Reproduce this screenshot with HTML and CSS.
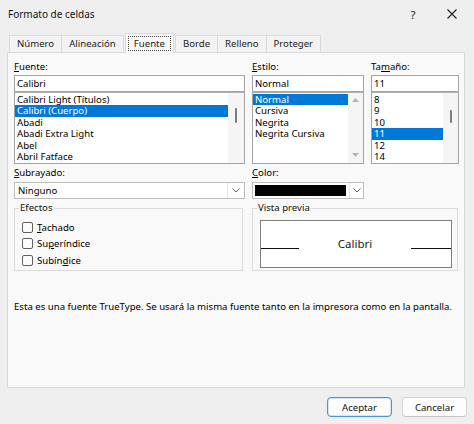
FILE: index.html
```html
<!DOCTYPE html>
<html lang="es">
<head>
<meta charset="utf-8">
<title>Formato de celdas</title>
<link rel="stylesheet" href="styles.css">
</head>
<body>
<div class="dialog">
  <header class="titlebar">
    <span class="title">Formato de celdas</span>
    <span class="help">?</span>
    <svg class="close" width="10" height="10" viewBox="0 0 10 10"><path d="M0.5 0.5L9.5 9.5M9.5 0.5L0.5 9.5" stroke="#1f1f1f" stroke-width="1.1" fill="none"/></svg>
  </header>
  <nav class="tabs">
    <span class="tab">Número</span>
    <span class="tab">Alineación</span>
    <span class="tab active"><span class="focus">Fuente</span></span>
    <span class="tab">Borde</span>
    <span class="tab">Relleno</span>
    <span class="tab">Proteger</span>
  </nav>
  <section class="panel">
    <div class="grid-top">
      <div class="col">
        <div class="lbl"><u>F</u>uente:</div>
        <div class="input">Calibri</div>
        <div class="list">
          <ul class="items">
            <li>Calibri Light (Títulos)</li>
            <li class="sel">Calibri (Cuerpo)</li>
            <li>Abadi</li>
            <li>Abadi Extra Light</li>
            <li>Abel</li>
            <li>Abril Fatface</li>
          </ul>
          <div class="scroll scroll-font"><span class="thumb"></span></div>
        </div>
      </div>
      <div class="col">
        <div class="lbl"><u>E</u>stilo:</div>
        <div class="input">Normal</div>
        <div class="list">
          <ul class="items">
            <li class="sel">Normal</li>
            <li>Cursiva</li>
            <li>Negrita</li>
            <li>Negrita Cursiva</li>
          </ul>
          <div class="scroll scroll-style">
            <svg width="7" height="4" viewBox="0 0 7 4"><path d="M0 4L3.5 0L7 4Z" fill="#b4b4b4"/></svg>
            <svg width="7" height="4" viewBox="0 0 7 4"><path d="M0 0L3.5 4L7 0Z" fill="#b4b4b4"/></svg>
          </div>
        </div>
      </div>
      <div class="col">
        <div class="lbl">Ta<u>m</u>año:</div>
        <div class="input">11</div>
        <div class="list">
          <ul class="items">
            <li>8</li>
            <li>9</li>
            <li>10</li>
            <li class="sel">11</li>
            <li>12</li>
            <li>14</li>
          </ul>
          <div class="scroll scroll-size"><span class="thumb"></span></div>
        </div>
      </div>
    </div>

    <div class="grid-mid">
      <div class="col">
        <div class="lbl lbl-mid"><u>S</u>ubrayado:</div>
        <div class="dropdown">
          <span class="dd-text">Ninguno</span>
          <span class="dd-btn dd-btn-wide"><svg width="8" height="5" viewBox="0 0 8 5"><path d="M0.5 0.5L4 4L7.5 0.5" stroke="#606060" stroke-width="1" fill="none"/></svg></span>
        </div>
      </div>
      <div class="col">
        <div class="lbl lbl-mid"><u>C</u>olor:</div>
        <div class="dropdown">
          <span class="swatch"></span>
          <span class="dd-btn"><svg width="8" height="5" viewBox="0 0 8 5"><path d="M0.5 0.5L4 4L7.5 0.5" stroke="#606060" stroke-width="1" fill="none"/></svg></span>
        </div>
      </div>
    </div>

    <div class="grid-groups">
      <fieldset class="group">
        <legend>Efectos</legend>
        <div class="checks">
          <div class="check"><span class="box"></span><span><u>T</u>achado</span></div>
          <div class="check"><span class="box"></span><span>Su<u>p</u>eríndice</span></div>
          <div class="check"><span class="box"></span><span>Subín<u>d</u>ice</span></div>
        </div>
      </fieldset>
      <fieldset class="group">
        <legend>Vista previa</legend>
        <div class="preview">
          <span class="pline pline-left"></span>
          <span class="ptext">Calibri</span>
          <span class="pline pline-right"></span>
        </div>
      </fieldset>
    </div>

    <p class="note">Esta es una fuente TrueType. Se usará la misma fuente tanto en la impresora como en la pantalla.</p>
  </section>
  <footer class="buttons">
    <button class="btn btn-default">Aceptar</button>
    <button class="btn">Cancelar</button>
  </footer>
</div>
</body>
</html>
```
FILE: styles.css
```css
* { box-sizing: border-box; }

html, body {
  margin: 0;
  padding: 0;
}

body {
  background: #efefef;
  font-family: "Noto Sans", "DejaVu Sans", sans-serif;
  font-size: 9.6px;
  color: #000;
}

u { text-underline-offset: 1px; }

.dialog {
  width: 474px;
  height: 424px;
  display: flex;
  flex-direction: column;
  background: #efefef;
  overflow: hidden;
}

/* Title bar */
.titlebar {
  height: 33px;
  flex: none;
  display: flex;
  align-items: center;
  padding: 0 17px 5px 8px;
}
.title {
  flex: 1;
  font-size: 10px;
  color: #111;
}
.help {
  width: 10px;
  text-align: center;
  font-size: 11.5px;
  color: #222;
  margin-right: 29px;
}
.close { display: block; }

/* Tabs */
.tabs {
  height: 19px;
  flex: none;
  display: flex;
  align-items: flex-end;
  padding-left: 9px;
}
.tab {
  height: 17px;
  line-height: 16px;
  padding: 0 7px;
  border: 1px solid #dadada;
  border-bottom: none;
  margin-right: -1px;
  background: #f3f3f3;
  color: #1a1a1a;
  white-space: nowrap;
}
.tab.active {
  height: 20px;
  margin: 0 1px -1px 2px;
  padding: 2px 2px 0;
  background: #f9f9f9;
  position: relative;
  z-index: 1;
}
.focus {
  display: block;
  border: 1px dotted #444;
  line-height: 13px;
  padding: 0 5px;
}

/* Panel */
.panel {
  flex: none;
  width: 458px;
  height: 336px;
  margin-left: 7px;
  border: 1px solid #dadada;
  background: #f9f9f9;
  padding: 7px 4px 0 6px;
}

.grid-top {
  display: grid;
  grid-template-columns: 231px 112px 88px;
  column-gap: 7px;
}
.lbl {
  height: 14px;
  line-height: 14px;
  margin-bottom: 1px;
  white-space: nowrap;
}
.input {
  height: 17px;
  border: 1px solid #a4a4a4;
  background: #fff;
  line-height: 15px;
  padding: 0 2px;
}
.list {
  height: 72px;
  border: 1px solid #a4a4a4;
  border-top-color: #b0b0b0;
  background: #fff;
  display: flex;
  overflow: hidden;
}
.items {
  flex: 1;
  list-style: none;
  margin: 0;
  padding: 1px 0 0;
  line-height: 11.4px;
  min-width: 0;
}
.items li {
  padding-left: 2px;
  white-space: nowrap;
  overflow: hidden;
}
.items li.sel {
  background: #0078d7;
  color: #fff;
}
.scroll {
  flex: none;
  width: 15px;
  background: #f5f5f5;
  display: flex;
  flex-direction: column;
  align-items: center;
}
.scroll-font { width: 16px; padding-top: 15px; }
.scroll-size { padding-top: 17px; }
.scroll-style {
  justify-content: space-between;
  padding: 5px 0 6px;
}
.scroll svg { display: block; }
.thumb {
  display: block;
  width: 2px;
  height: 15px;
  background: #7c7c7c;
  border-radius: 1px;
}
.scroll-size .thumb { height: 13px; }

/* Middle row */
.grid-mid {
  display: grid;
  grid-template-columns: 231px 112px;
  column-gap: 7px;
  margin-top: 2px;
}
.lbl-mid { margin-bottom: 2px; }
.dropdown {
  height: 17px;
  display: flex;
  border: 1px solid #bdbdbd;
  background: #fff;
}
.dd-text {
  flex: 1;
  line-height: 15px;
  padding-left: 3px;
}
.dd-btn {
  flex: none;
  width: 14px;
  border-left: 1px solid #e4e4e4;
  display: flex;
  align-items: center;
  justify-content: center;
}
.dd-btn-wide { width: 17px; }
.dd-btn svg { display: block; }
.swatch {
  flex: 1;
  margin: 2px 3px 2px 2px;
  background: #000;
}

/* Groups */
.grid-groups {
  display: grid;
  grid-template-columns: 229px 206px;
  column-gap: 9px;
  margin-top: 2px;
}
.group {
  margin: 0;
  padding: 0;
  min-width: 0;
  height: 70px;
  border: 1px solid #dcdcdc;
}
.group legend {
  margin-left: 4px;
  padding: 0 1px;
  line-height: 14px;
  color: #111;
}
.checks {
  padding: 4px 0 0 7px;
}
.check {
  display: flex;
  align-items: center;
  height: 16.5px;
}
.box {
  width: 11px;
  height: 11px;
  border: 1px solid #616161;
  border-radius: 2px;
  background: #fbfbfb;
  margin-right: 4px;
  flex: none;
}
.preview {
  margin: 5px 5px 0 7px;
  height: 48px;
  border: 1px solid #7d7d7d;
  background: #fff;
  display: flex;
  align-items: center;
}
.pline {
  flex: none;
  align-self: flex-end;
  height: 1px;
  margin-bottom: 18px;
  background: #111;
}
.pline-left { width: 38px; }
.pline-right { width: 40px; }
.ptext {
  flex: 1;
  text-align: center;
  font-size: 11.5px;
  color: #222;
  padding-bottom: 1px;
}

.note {
  margin: 29px 0 0;
  line-height: 14px;
  white-space: nowrap;
}

/* Buttons */
.buttons {
  flex: none;
  display: flex;
  justify-content: flex-end;
  gap: 10px;
  padding-right: 7px;
  margin-top: 9px;
}
.btn {
  width: 65px;
  height: 20px;
  padding: 0;
  font-family: inherit;
  font-size: 9.6px;
  color: #111;
  background: #fdfdfd;
  border: 1px solid #d3d3d3;
  border-bottom-color: #c4c4c4;
  border-radius: 4px;
}
.btn-default {
  border: 1px solid #4f93d6;
  box-shadow: inset 0 0 0 0.5px #a9cdef;
}
```
